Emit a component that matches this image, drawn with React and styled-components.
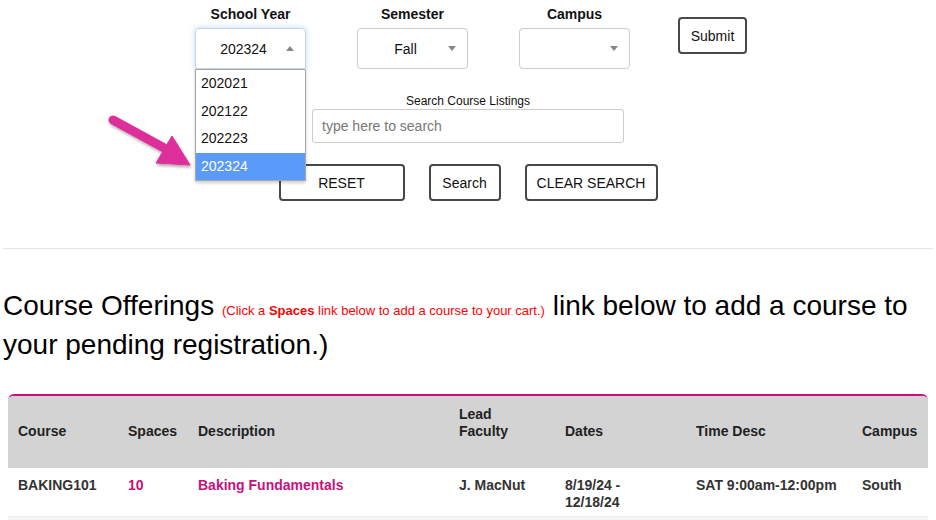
import React from "react";
import styled, { createGlobalStyle } from "styled-components";

const GlobalStyle = createGlobalStyle`
  body {
    margin: 0;
    background: #fff;
    font-family: "Liberation Sans", Arial, sans-serif;
    color: #111;
  }
`;

const Page = styled.div`
  position: relative;
  width: 936px;
  padding: 0 3px;
  box-sizing: border-box;
`;

const FilterBar = styled.div`
  display: flex;
  align-items: flex-start;
  padding: 6px 0 0 192px;
`;

const Group = styled.div`
  position: relative;
  display: flex;
  flex-direction: column;
  align-items: center;
  width: 111px;
  margin-right: ${(p) => p.$gap || 0}px;
`;

const Label = styled.div`
  font-size: 14px;
  font-weight: bold;
  line-height: 17px;
  margin-bottom: 5px;
`;

const Select = styled.div`
  position: relative;
  box-sizing: border-box;
  width: 111px;
  height: 41px;
  border: 1px solid ${(p) => (p.$open ? "#c6d6ec" : "#ccc")};
  border-radius: ${(p) => (p.$open ? "4px 4px 0 0" : "4px")};
  box-shadow: ${(p) => (p.$open ? "0 0 5px 1px rgba(120,170,240,0.35)" : "none")};
  display: flex;
  align-items: center;
  justify-content: center;
  padding-right: 14px;
  font-size: 14px;
  color: #111;
`;

const Caret = styled.span`
  position: absolute;
  right: 11px;
  top: 17px;
  width: 0;
  height: 0;
  border-left: 4px solid transparent;
  border-right: 4px solid transparent;
  ${(p) =>
    p.$up
      ? "border-bottom: 5px solid #888;"
      : "border-top: 5px solid #888;"}
`;

const Dropdown = styled.ul`
  position: absolute;
  top: 63px;
  left: 0;
  z-index: 2;
  box-sizing: border-box;
  width: 111px;
  margin: 0;
  padding: 0;
  list-style: none;
  background: #fff;
  border: 1px solid #a8a8a8;
  box-shadow: 0 2px 3px rgba(0, 0, 0, 0.2);
`;

const Option = styled.li`
  height: 27.5px;
  line-height: 27.5px;
  padding-left: 5px;
  font-size: 14px;
  color: ${(p) => (p.$active ? "#fff" : "#111")};
  background: ${(p) => (p.$active ? "#5a9bfa" : "transparent")};
`;

const Button = styled.button`
  box-sizing: border-box;
  height: 37px;
  width: ${(p) => p.$w}px;
  margin-top: ${(p) => p.$top || 0}px;
  background: #fff;
  border: 2px solid #484848;
  border-radius: 4px;
  font-family: "Liberation Sans", Arial, sans-serif;
  font-size: 14px;
  color: #111;
  padding: 0;
`;

const SearchBlock = styled.div`
  display: flex;
  flex-direction: column;
  align-items: center;
  margin-top: 25px;
`;

const SearchLabel = styled.div`
  font-size: 12px;
  line-height: 14px;
  margin-bottom: 1px;
`;

const SearchInput = styled.input`
  box-sizing: border-box;
  width: 312px;
  height: 34px;
  border: 1px solid #ccc;
  border-radius: 3px;
  padding: 0 9px;
  font-family: "Liberation Sans", Arial, sans-serif;
  font-size: 14px;
  &::placeholder {
    color: #777;
  }
`;

const ButtonRow = styled.div`
  display: flex;
  justify-content: center;
  gap: 24px;
  margin-top: 21px;
`;

const Rule = styled.hr`
  margin: 47px 0 0;
  border: 0;
  border-top: 1px solid #e3e3e3;
`;

const Heading = styled.h2`
  margin: 37px 0 0;
  font-size: 28px;
  font-weight: normal;
  line-height: 39px;
  color: #000;
`;

const Hint = styled.span`
  font-size: 13px;
  line-height: 1;
  color: #f00;
  b {
    font-weight: bold;
  }
`;

const Table = styled.table`
  margin: 30px 5px 0;
  width: 920px;
  border-collapse: separate;
  border-spacing: 0;
  table-layout: fixed;
  border-top: 2px solid #c8107f;
  border-radius: 6px 6px 0 0;
  overflow: hidden;
`;

const HeadCell = styled.th`
  background: #d3d3d3;
  text-align: left;
  vertical-align: bottom;
  padding: 10px 10px 28px;
  font-size: 14px;
  line-height: 17px;
  font-weight: bold;
  color: #222;
`;

const Cell = styled.td`
  vertical-align: top;
  padding: 9px 10px 5px;
  font-size: 14px;
  line-height: 17px;
  font-weight: bold;
  color: ${(p) => (p.$link ? "#c8107f" : "#333")};
`;

const StripeRow = styled.tr`
  td {
    background: #f5f5f5;
    height: 20px;
    padding: 0;
    border-top: 1px solid #eee;
  }
`;

const Pointer = styled.svg`
  position: absolute;
  left: 100px;
  top: 105px;
  z-index: 3;
  overflow: visible;
`;

const columns = [
  { label: "Course", w: 110 },
  { label: "Spaces", w: 70 },
  { label: "Description", w: 261 },
  { label: ["Lead", "Faculty"], w: 106 },
  { label: "Dates", w: 131 },
  { label: "Time Desc", w: 166 },
  { label: "Campus", w: 76 },
];

const years = ["202021", "202122", "202223", "202324"];

export default function App() {
  return (
    <>
      <GlobalStyle />
      <Page>
        <FilterBar>
          <Group $gap={51}>
            <Label>School Year</Label>
            <Select $open>
              202324
              <Caret $up />
            </Select>
            <Dropdown>
              {years.map((y) => (
                <Option key={y} $active={y === "202324"}>
                  {y}
                </Option>
              ))}
            </Dropdown>
          </Group>
          <Group $gap={51}>
            <Label>Semester</Label>
            <Select>
              Fall
              <Caret />
            </Select>
          </Group>
          <Group $gap={48}>
            <Label>Campus</Label>
            <Select>
              <Caret />
            </Select>
          </Group>
          <Button $w={69} $top={11}>
            Submit
          </Button>
        </FilterBar>

        <SearchBlock>
          <SearchLabel>Search Course Listings</SearchLabel>
          <SearchInput placeholder="type here to search" />
        </SearchBlock>

        <ButtonRow>
          <Button $w={126}>RESET</Button>
          <Button $w={72}>Search</Button>
          <Button $w={133}>CLEAR SEARCH</Button>
        </ButtonRow>

        <Rule />

        <Heading>
          Course Offerings{" "}
          <Hint>
            (Click a <b>Spaces</b> link below to add a course to your cart.)
          </Hint>{" "}
          link below to add a course to your pending registration.)
        </Heading>

        <Table>
          <colgroup>
            {columns.map((c, i) => (
              <col key={i} style={{ width: c.w }} />
            ))}
          </colgroup>
          <thead>
            <tr>
              {columns.map((c, i) => (
                <HeadCell key={i}>
                  {Array.isArray(c.label) ? (
                    <>
                      {c.label[0]}
                      <br />
                      {c.label[1]}
                    </>
                  ) : (
                    c.label
                  )}
                </HeadCell>
              ))}
            </tr>
          </thead>
          <tbody>
            <tr>
              <Cell>BAKING101</Cell>
              <Cell $link>10</Cell>
              <Cell $link>Baking Fundamentals</Cell>
              <Cell>J. MacNut</Cell>
              <Cell>
                8/19/24 -
                <br />
                12/18/24
              </Cell>
              <Cell>SAT 9:00am-12:00pm</Cell>
              <Cell>South</Cell>
            </tr>
            <StripeRow>
              <td colSpan={7} />
            </StripeRow>
          </tbody>
        </Table>

        <Pointer width="100" height="75" viewBox="0 0 100 75">
          <defs>
            <filter id="drop" x="-20%" y="-20%" width="150%" height="150%">
              <feDropShadow dx="1" dy="2" stdDeviation="1.5" floodColor="#000" floodOpacity="0.35" />
            </filter>
          </defs>
          <g filter="url(#drop)" fill="#de2f9a" stroke="#de2f9a">
            <line x1="13" y1="15" x2="66" y2="44" strokeWidth="9" strokeLinecap="round" />
            <polygon points="72,31 56,58 90,60" strokeWidth="1" strokeLinejoin="round" />
          </g>
        </Pointer>
      </Page>
    </>
  );
}
